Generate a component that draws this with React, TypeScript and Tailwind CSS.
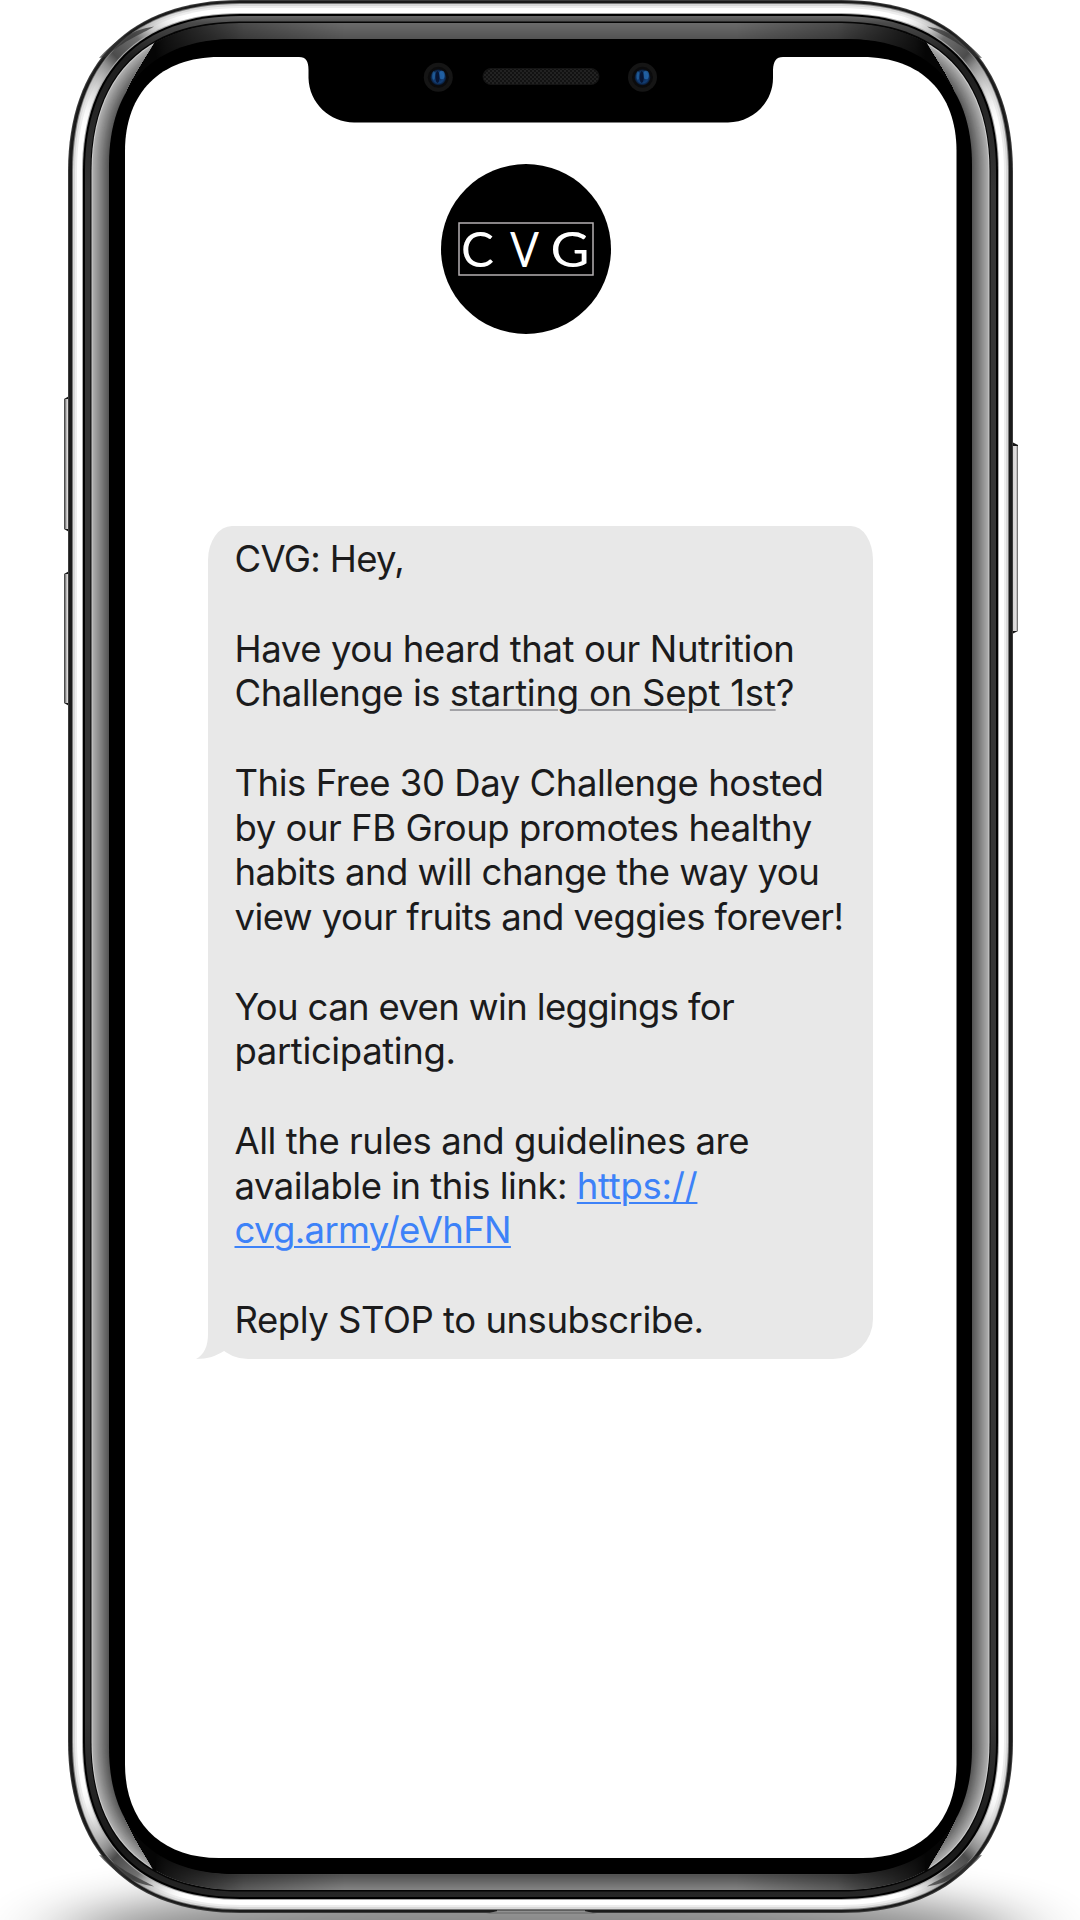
const roundedPath = (l: number, t: number, r: number, b: number, rad: number, k = 0.64) => {
  const h = rad * (1 - k);
  return `M${l} ${t + rad} C${l} ${t + h} ${l + h} ${t} ${l + rad} ${t} H${r - rad} C${r - h} ${t} ${r} ${t + h} ${r} ${t + rad} V${b - rad} C${r} ${b - h} ${r - h} ${b} ${r - rad} ${b} H${l + rad} C${l + h} ${b} ${l} ${b - h} ${l} ${b - rad} Z`;
};

const W = { l: 68, t: 0, r: 1013, b: 1913 };
const ring = (dx: number, dy: number, rad: number, k?: number) =>
  roundedPath(W.l + dx, W.t + dy, W.r - dx, W.b - dy, rad, k);

const grey = (v: number) => `rgb(${v},${v},${v})`;

const sideSheen = Array.from({ length: 18 }, (_, i) => ({
  d: ring(23.5 + i, 23 + i, 148 - i * 1.1),
  fill: grey(i === 0 ? 205 : Math.round(178 - i * 5.6)),
}));
const topSheen = Array.from({ length: 16 }, (_, i) => ({
  d: ring(24 + i, 23 + i, 148 - i * 1.1),
  fill: grey(Math.round(106 - i * 1.5)),
}));
const bottomSheen = Array.from({ length: 16 }, (_, i) => ({
  d: ring(24 + i, 22 + i, 148 - i * 1.1),
  fill: grey(Math.round(134 - i * 3.4)),
}));

function CornerShade({ transform }: { transform?: string }) {
  return (
    <g transform={transform}>
      <path d="M77.5 172 C77.5 67.4 136.4 8.500 241 8.500" fill="none" stroke="url(#corner)" strokeWidth="10.500" />
      <path d="M99 58 C112 43 130 30 154 26.500 C142 34 124 40 106 57 Z" fill="#303030" opacity="0.7" />
    </g>
  );
}

function Camera({ cx }: { cx: number }) {
  return (
    <g>
      <circle cx={cx} cy="77.3" r="14.5" fill="#151515" />
      <circle cx={cx} cy="77.3" r="10.5" fill="#0b0b0c" />
      <circle cx={cx} cy="77.3" r="8" fill="url(#lens)" />
      <ellipse cx={cx - 4.6} cy="75.5" rx="1.4" ry="4.2" fill="#2f7fc4" opacity="0.45" />
      <ellipse cx={cx + 3.6} cy="75" rx="2.8" ry="4.2" fill="#2b7ac6" opacity="0.6" />
      <ellipse cx={cx - 0.8} cy="77" rx="2" ry="6" fill="#06112c" opacity="0.85" />
    </g>
  );
}

function Device() {
  return (
    <svg className="pointer-events-none absolute inset-0" width="1080" height="1920" viewBox="0 0 1080 1920" aria-hidden="true">
      <defs>
        <linearGradient id="corner" gradientUnits="userSpaceOnUse" x1="72" y1="120" x2="185" y2="10">
          <stop offset="0" stopColor="#fff" stopOpacity="0" />
          <stop offset="0.28" stopColor="#bbb" stopOpacity="0.8" />
          <stop offset="0.4" stopColor="#8f8f8f" />
          <stop offset="0.48" stopColor="#4c4c4c" />
          <stop offset="0.66" stopColor="#707070" />
          <stop offset="0.76" stopColor="#b9b9b9" stopOpacity="0.8" />
          <stop offset="1" stopColor="#fff" stopOpacity="0" />
        </linearGradient>
        <linearGradient id="fade" gradientUnits="userSpaceOnUse" x1="150" y1="0" x2="931" y2="0">
          <stop offset="0" stopColor="#000" />
          <stop offset="0.02" stopColor="#000" stopOpacity="0.85" />
          <stop offset="0.12" stopColor="#000" stopOpacity="0.3" />
          <stop offset="0.25" stopColor="#000" stopOpacity="0" />
          <stop offset="0.75" stopColor="#000" stopOpacity="0" />
          <stop offset="0.88" stopColor="#000" stopOpacity="0.3" />
          <stop offset="0.98" stopColor="#000" stopOpacity="0.85" />
          <stop offset="1" stopColor="#000" />
        </linearGradient>
        <linearGradient id="band" gradientUnits="userSpaceOnUse" x1="0" y1="0" x2="0" y2="1913">
          <stop offset="0.008" stopColor="#6a6a6a" />
          <stop offset="0.012" stopColor="#4a4a4a" />
          <stop offset="0.03" stopColor="#1c1c1c" />
          <stop offset="0.1" stopColor="#353535" />
          <stop offset="0.9" stopColor="#353535" />
          <stop offset="0.965" stopColor="#171717" />
          <stop offset="1" stopColor="#2c2c2c" />
        </linearGradient>
        <linearGradient id="key" x1="0" y1="0" x2="1" y2="0">
          <stop offset="0" stopColor="#333" />
          <stop offset="0.22" stopColor="#8a8a8a" />
          <stop offset="0.4" stopColor="#d8d6d6" />
          <stop offset="0.75" stopColor="#e2e0e0" />
          <stop offset="1" stopColor="#555" />
        </linearGradient>
        <radialGradient id="lens">
          <stop offset="0" stopColor="#0c2550" />
          <stop offset="0.7" stopColor="#123d73" />
          <stop offset="1" stopColor="#081327" />
        </radialGradient>
        <pattern id="mesh" width="4" height="4" patternUnits="userSpaceOnUse">
          <rect width="4" height="4" fill="#222" />
          <circle cx="1" cy="1" r="0.9" fill="#090909" />
          <circle cx="3" cy="3" r="0.9" fill="#090909" />
        </pattern>
        <filter id="soft" x="-20%" y="-200%" width="140%" height="500%">
          <feGaussianBlur stdDeviation="44 20" />
        </filter>
        <clipPath id="glass">
          <path d={ring(24, 23, 148)} />
        </clipPath>
        <clipPath id="sides">
          <path d="M60 160 V1755 C75 1830 115 1870 157 1876 C134 1838 109 1805 109 1740 V173 C109 108 134 75 158 37 C115 40 75 80 60 160 Z" />
          <path d="M1021 160 V1755 C1006 1830 966 1870 924 1876 C947 1838 972 1805 972 1740 V173 C972 108 947 75 923 37 C966 40 1006 80 1021 160 Z" />
        </clipPath>
        <clipPath id="upper">
          <path d="M156 0 H925 V60 H156 Z" />
        </clipPath>
        <clipPath id="lower">
          <path d="M156 1850 H925 V1913 H156 Z" />
        </clipPath>
      </defs>

      <ellipse cx="540" cy="1932" rx="480" ry="46" fill="#000" opacity="0.47" filter="url(#soft)" />

      <path d="M71 395 L64 399 V529 L71 533 Z M71 570 L64 574 V703 L71 707 Z M1010 441 L1018 445 V631 L1010 635 Z" fill="#161616" />
      <rect x="64" y="399" width="7.5" height="130" fill="url(#key)" />
      <rect x="64" y="574" width="7.5" height="129" fill="url(#key)" />
      <rect x="1010" y="446" width="8" height="185" fill="url(#key)" />

      <path d={ring(0, 0, 172)} fill="#3c3c3c" />
      <path d={ring(1, 1, 171)} fill="#1b1b1b" />
      <path d={ring(4, 3, 168)} fill="#777" />
      <path d={ring(5, 4, 167)} fill="#d8d8d8" />
      <path d={ring(7, 6, 165)} fill="#ededed" />
      <path d={ring(9, 8, 164)} fill="#fff" />
      <CornerShade />
      <CornerShade transform="translate(1081 0) scale(-1 1)" />
      <CornerShade transform="translate(0 1913) scale(1 -1)" />
      <CornerShade transform="translate(1081 1913) scale(-1 -1)" />
      <path d={ring(14, 13, 158)} fill="#a8a8a8" />
      <path d={ring(15, 14, 157)} fill="#000" />
      <path d={ring(17, 16, 155)} fill="url(#band)" />
      <path d={ring(22.5, 21.5, 149)} fill="#050505" />

      <g clipPath="url(#glass)">
        <g clipPath="url(#upper)">
          {topSheen.map((s) => (
            <path key={s.d} d={s.d} fill={s.fill} />
          ))}
          <rect x="150" y="23" width="781" height="40" fill="url(#fade)" />
        </g>
        <g clipPath="url(#lower)">
          {bottomSheen.map((s) => (
            <path key={s.d} d={s.d} fill={s.fill} />
          ))}
          <rect x="150" y="1850" width="781" height="41" fill="url(#fade)" />
        </g>
        <path d={ring(40, 39, 130)} fill="#000" />
      </g>
      <g clipPath="url(#sides)">
        {sideSheen.map((s) => (
          <path key={s.d} d={s.d} fill={s.fill} />
        ))}
      </g>
      <path d={ring(41, 39, 126)} fill="#000" />
      <path d={roundedPath(125, 57, 956.5, 1858, 94, 0.62)} fill="#fff" />

      <path d="M299 56 V57 C306 57 308.500 61 308.500 70 V78 C309 103 330 122.500 354 122.500 H728 C752 122.500 773 103 773 78 V70 C773.500 61 776 57 783 57 V56 Z" fill="#000" />
      <rect x="483" y="68.500" width="116" height="16" rx="8" fill="url(#mesh)" stroke="#141414" />
      <Camera cx={438.3} />
      <Camera cx={642.5} />

      <path d="M486 1914 L497 1911 H585 L597 1914 Z" fill="#7b7b7b" />
      <path d="M497 1911 H585" stroke="#a5a5a5" />
    </svg>
  );
}

function Logo() {
  return (
    <div className="flex size-[170px] items-center justify-center rounded-full bg-black">
      <svg className="overflow-visible" width="136" height="55" viewBox="0 0 136 55" role="img" aria-label="CVG">
        <rect x="1" y="1" width="134" height="52" fill="none" stroke="#b5b0b2" strokeWidth="1.500" />
        <g fill="#fff" fontFamily="Lato, sans-serif" fontSize="48" fontWeight="400">
          <text x="3" y="44.500" textLength="33" lengthAdjust="spacingAndGlyphs">C</text>
          <text x="52" y="44.500" textLength="29" lengthAdjust="spacingAndGlyphs">V</text>
          <text x="92.500" y="44.500" textLength="39" lengthAdjust="spacingAndGlyphs">G</text>
        </g>
      </svg>
    </div>
  );
}

function Message() {
  return (
    <div className="relative h-[833px] w-[665px] rounded-tl-[24px_34px] rounded-tr-[22px_34px] rounded-br-[40px] rounded-bl-[40px] bg-[#e8e8e8] pt-[11px] pl-[26.500px]">
      <svg className="absolute bottom-0 -left-3" width="40" height="50" viewBox="0 0 40 50" aria-hidden="true">
        <path d="M12 0 V25 C12 37 8 46 0 50 C12 50 20 47 28 42 V0 Z" fill="#e8e8e8" />
      </svg>
      <div className="relative space-y-[44.750px] whitespace-nowrap font-[Inter,sans-serif] text-[36.500px] leading-[44.750px] text-[#1b1b1c]">
        <p className="tracking-[-0.680px]">CVG: Hey,</p>
        <p>
          <span className="tracking-[-0.410px]">Have you heard that our Nutrition</span>
          <br />
          <span className="tracking-[-0.480px]">Challenge is </span>
          <span className="tracking-[-0.220px]">
            <span className="underline decoration-[#a2a2a6] decoration-2 underline-offset-[3px]">starting on Sept 1st</span>?
          </span>
        </p>
        <p>
          <span className="tracking-[-0.460px]">This Free 30 Day Challenge hosted</span>
          <br />
          <span className="tracking-[-0.470px]">by our FB Group promotes healthy</span>
          <br />
          <span className="tracking-[-0.540px]">habits and will change the way you</span>
          <br />
          <span className="tracking-[-0.560px]">view your fruits and veggies forever!</span>
        </p>
        <p>
          <span className="tracking-[-0.650px]">You can even win leggings for</span>
          <br />
          <span className="tracking-[-0.380px]">participating.</span>
        </p>
        <p>
          <span className="tracking-[-0.460px]">All the rules and guidelines are</span>
          <br />
          <span className="tracking-[-0.500px]">available in this link: </span>
          <a className="tracking-[-0.300px] text-[#3d82f8] underline decoration-2 underline-offset-[3px]">
            https://
            <br />
            <span className="tracking-[-0.680px]">cvg.army/eVhFN</span>
          </a>
        </p>
        <p className="tracking-[-0.470px]">Reply STOP to unsubscribe.</p>
      </div>
    </div>
  );
}

export default function App() {
  return (
    <div className="relative h-[1920px] w-[1080px] overflow-hidden bg-white">
      <Device />
      <main className="relative flex flex-col items-start pt-[164px]">
        <div className="pl-[441px]">
          <Logo />
        </div>
        <div className="mt-48 pl-[208px]">
          <Message />
        </div>
      </main>
    </div>
  );
}
